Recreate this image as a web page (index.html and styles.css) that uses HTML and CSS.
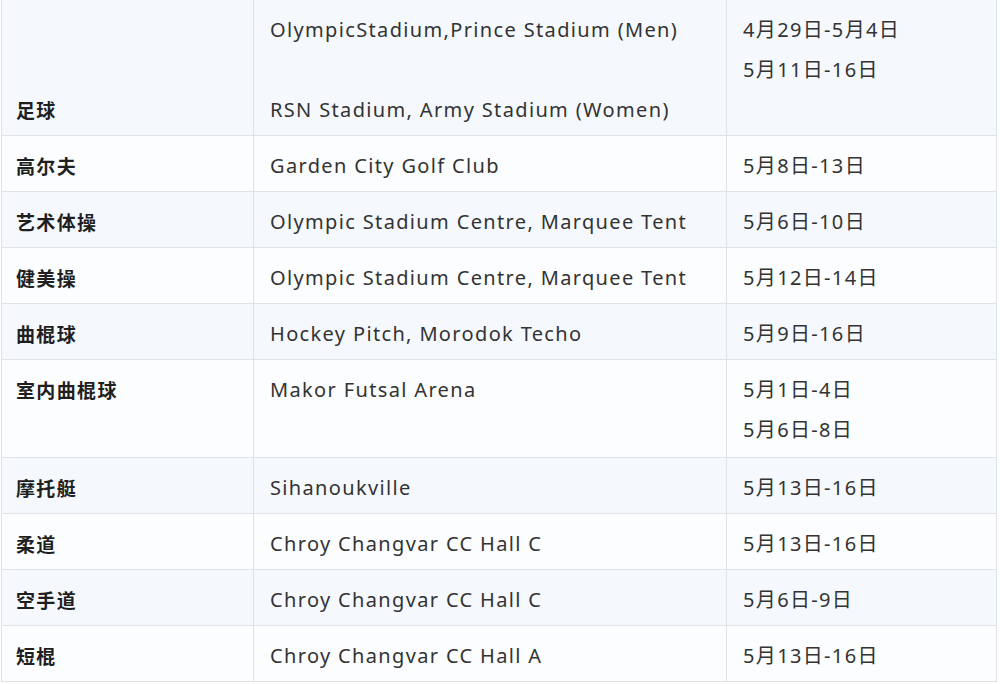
FILE: index.html
```html
<!DOCTYPE html>
<html lang="zh">
<head>
<meta charset="utf-8">
<title>场馆与日期</title>
<link rel="stylesheet" href="styles.css">
</head>
<body>
<table class="sched">
  <colgroup>
    <col class="c-sport">
    <col class="c-venue">
    <col class="c-date">
  </colgroup>
  <tbody>
    <tr class="odd">
      <td class="sport bottom"><div class="ln">足球</div></td>
      <td class="venue"><div class="ln">OlympicStadium,Prince Stadium (Men)</div><div class="ln">&nbsp;</div><div class="ln">RSN Stadium, Army Stadium (Women)</div></td>
      <td class="date"><div class="ln">4月29日-5月4日</div><div class="ln">5月11日-16日</div></td>
    </tr>
    <tr class="even">
      <td class="sport"><div class="ln">高尔夫</div></td>
      <td class="venue"><div class="ln">Garden City Golf Club</div></td>
      <td class="date"><div class="ln">5月8日-13日</div></td>
    </tr>
    <tr class="odd">
      <td class="sport"><div class="ln">艺术体操</div></td>
      <td class="venue"><div class="ln">Olympic Stadium Centre, Marquee Tent</div></td>
      <td class="date"><div class="ln">5月6日-10日</div></td>
    </tr>
    <tr class="even">
      <td class="sport"><div class="ln">健美操</div></td>
      <td class="venue"><div class="ln">Olympic Stadium Centre, Marquee Tent</div></td>
      <td class="date"><div class="ln">5月12日-14日</div></td>
    </tr>
    <tr class="odd">
      <td class="sport"><div class="ln">曲棍球</div></td>
      <td class="venue"><div class="ln">Hockey Pitch, Morodok Techo</div></td>
      <td class="date"><div class="ln">5月9日-16日</div></td>
    </tr>
    <tr class="even two">
      <td class="sport"><div class="ln">室内曲棍球</div></td>
      <td class="venue"><div class="ln">Makor Futsal Arena</div></td>
      <td class="date"><div class="ln">5月1日-4日</div><div class="ln">5月6日-8日</div></td>
    </tr>
    <tr class="odd">
      <td class="sport"><div class="ln">摩托艇</div></td>
      <td class="venue"><div class="ln">Sihanoukville</div></td>
      <td class="date"><div class="ln">5月13日-16日</div></td>
    </tr>
    <tr class="even">
      <td class="sport"><div class="ln">柔道</div></td>
      <td class="venue"><div class="ln">Chroy Changvar CC Hall C</div></td>
      <td class="date"><div class="ln">5月13日-16日</div></td>
    </tr>
    <tr class="odd">
      <td class="sport"><div class="ln">空手道</div></td>
      <td class="venue"><div class="ln">Chroy Changvar CC Hall C</div></td>
      <td class="date"><div class="ln">5月6日-9日</div></td>
    </tr>
    <tr class="even">
      <td class="sport"><div class="ln">短棍</div></td>
      <td class="venue"><div class="ln">Chroy Changvar CC Hall A</div></td>
      <td class="date"><div class="ln">5月13日-16日</div></td>
    </tr>
  </tbody>
</table>
</body>
</html>
```

FILE: styles.css
```css
html, body {
  margin: 0;
  padding: 0;
  background: #ffffff;
}

body {
  padding: 0 4px 0 1px;
  font-family: "Noto Sans", "Noto Sans CJK SC", sans-serif;
  font-size: 20px;
  color: #333333;
}

.sched {
  border-collapse: collapse;
  width: 995px;
  table-layout: fixed;
}

.c-sport { width: 252px; }
.c-venue { width: 473px; }
.c-date { width: 270px; }

.sched td {
  border: 1px solid #dfe2e6;
  padding: 10px 16px 5px 16px;
  vertical-align: top;
  letter-spacing: 1.35px;
}

.sched td.sport {
  padding-left: 14px;
}

.sched tr:first-child td {
  border-top: none;
}

.sched td.bottom {
  vertical-align: bottom;
}

.two td {
  padding-bottom: 7px;
}

.odd { background: #f5f9fe; }
.even { background: #fcfdfe; }

.ln {
  line-height: 40px;
  height: 40px;
  white-space: nowrap;
}

.sport {
  font-family: "Noto Sans CJK SC", sans-serif;
  font-size: 19px;
  font-weight: 700;
  color: #1f1f1f;
  letter-spacing: 1.2px;
}
```
